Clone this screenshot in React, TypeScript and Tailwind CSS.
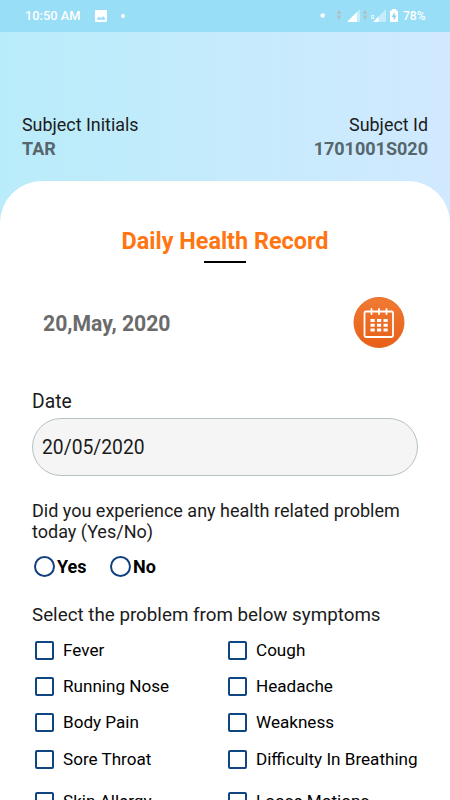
const symptoms = [
  { left: "Fever", right: "Cough" },
  { left: "Running Nose", right: "Headache" },
  { left: "Body Pain", right: "Weakness" },
  { left: "Sore Throat", right: "Difficulty In Breathing" },
];

export default function App() {
  return (
    <div className="h-[800px] w-[450px] overflow-hidden bg-linear-to-r from-[#b9ecfa] via-[#c5ebfc] to-[#d1e9ff] font-['Roboto',sans-serif] text-[#1b1b1b]">
      <StatusBar />

      <header className="flex h-[149px] justify-between pt-[81px] pr-[22px] pl-[22px] text-[18px] leading-6 whitespace-nowrap">
        <div>
          <p className="text-[17.9px]">Subject Initials</p>
          <p className="font-bold text-[#56666d]">TAR</p>
        </div>
        <div className="text-right">
          <p className="text-[17.9px]">Subject Id</p>
          <p className="font-bold text-[#56666d]">1701001S020</p>
        </div>
      </header>

      <main className="h-[619px] rounded-t-[42px] bg-white pt-[44px]">
        <h1 className="text-center text-[23.4px] leading-8 font-bold text-[#ff7611]">Daily Health Record</h1>
        <div className="mx-auto mt-[4px] h-[2px] w-[42px] bg-black" />

        <div className="mt-[34px] flex h-[51px] items-center justify-between pr-[45px] pl-[43px]">
          <span className="pt-[2px] text-[21.2px] font-bold text-[#6b6b6b]">20,May, 2020</span>
          <CalendarIcon />
        </div>

        <div className="mt-[42px] px-8">
          <label className="block text-[19.3px] leading-6">Date</label>
          <div className="mt-[4px] flex h-[58px] items-center rounded-full border-[1.5px] border-[#b5c1c4] bg-[#f5f5f5] pt-[3px] pl-[9px] text-[19.3px]">
            20/05/2020
          </div>

          <p className="mt-[24px] text-[18px] leading-[21px]">
            Did you experience any health related problem
            <br />
            today (Yes/No)
          </p>

          <div className="mt-[12px] flex h-6 items-center pl-[2px] text-[18px] font-bold text-black">
            <Radio label="Yes" className="w-[76px]" />
            <Radio label="No" />
          </div>

          <p className="mt-[25px] text-[18.8px] leading-6 whitespace-nowrap">Select the problem from below symptoms</p>

          <div className="mt-[5px] pl-[3px]">
            {symptoms.map((row) => (
              <div key={row.left} className="flex h-[36.3px] items-center">
                <Checkbox label={row.left} className="w-[193px]" />
                <Checkbox label={row.right} />
              </div>
            ))}
            <div className="mt-[6px] flex h-[36px] items-center">
              <Checkbox label="Skin Allergy" className="w-[193px]" />
              <Checkbox label="Loose Motions" />
            </div>
          </div>
        </div>
      </main>
    </div>
  );
}

function Radio({ label, className = "" }: { label: string; className?: string }) {
  return (
    <div className={`flex items-center gap-[2px] ${className}`}>
      <span className="size-[21px] rounded-full border-2 border-[#123f7d]" />
      <span>{label}</span>
    </div>
  );
}

function Checkbox({ label, className = "" }: { label: string; className?: string }) {
  return (
    <div className={`flex shrink-0 items-center gap-[9px] text-[17.1px] whitespace-nowrap text-black ${className}`}>
      <span className="size-[19px] shrink-0 rounded-[2px] border-2 border-[#0f4581]" />
      <span className="pt-px">{label}</span>
    </div>
  );
}

function StatusBar() {
  return (
    <div className="flex h-8 items-center bg-[#98def6] pr-[25px] pl-[25px] text-white">
      <span className="w-[58px] text-[12.8px] font-medium whitespace-nowrap">10:50 AM</span>
      <svg className="ml-[12px]" width="12" height="12" viewBox="0 0 12 12">
        <path fillRule="evenodd" fill="#fff" d="M1 0h10a1 1 0 0 1 1 1v10a1 1 0 0 1-1 1H1a1 1 0 0 1-1-1V1a1 1 0 0 1 1-1zM2 9.700h8V8L8 6.300 6 8.300 4 6.800 2 8.500z" />
      </svg>
      <span className="ml-[14px] size-[4px] rounded-full bg-white" />

      <svg className="ml-auto" width="80" height="16" viewBox="320 8 80 16">
        <circle cx="322.700" cy="15.500" r="2.200" fill="#fff" />
        <path fill="#aebfc5" d="M336.700 14l2.300-4.500 2.300 4.500zM336.700 15.500h4.600l-2.300 4.500zM362.700 14l2.300-4.500 2.300 4.500zM362.700 15.500h4.600l-2.300 4.500z" />
        <path fill="#c3edfb" d="M347 22l13-13v13zM373 22l13-13v13z" />
        <path fill="#fff" d="M347 22l10-10v10zM373 22l5.500-5.500v5.500z" />
        <rect x="371.700" y="15.500" width="2" height="3" fill="none" stroke="#e5f7fd" />
        <path fill="#fff" d="M392 9h4v1.500h1a1 1 0 0 1 1 1V21a1 1 0 0 1-1 1h-6a1 1 0 0 1-1-1v-9.500a1 1 0 0 1 1-1h1z" />
        <path fill="#8cd4ef" d="M394.700 12l-3 5h2v3.500l3-5h-2z" />
      </svg>
      <span className="ml-[3px] w-[22px] text-[12px] font-medium">78%</span>
    </div>
  );
}

function CalendarIcon() {
  return (
    <svg width="52" height="52" viewBox="0 0 52 52">
      <defs>
        <linearGradient id="calendarFill" x1="0" y1="0" x2="0" y2="1">
          <stop offset="0" stopColor="#f07a32" />
          <stop offset="1" stopColor="#e85f18" />
        </linearGradient>
      </defs>
      <circle cx="26" cy="25.500" r="25" fill="url(#calendarFill)" stroke="#e66a22" />
      <g fill="none" stroke="#fff" strokeWidth="1.800" strokeLinecap="round">
        <rect x="11.500" y="14.500" width="28.500" height="25.500" rx="1.500" />
        <path d="M18.500 12v5M26 12v5M33.500 12v5" />
      </g>
      <path
        fill="#fff"
        d="M17.500 22h4.200v3h-4.200zM24 22h4.200v3H24zM30.500 22h4.200v3h-4.200zM17.500 26.800h4.200v3h-4.200zM24 26.800h4.200v3H24zM30.500 26.800h4.200v3h-4.200zM17.500 31.500h4.200v3h-4.200zM24 31.500h4.200v3H24zM30.500 31.500h4.200v3h-4.200z"
      />
    </svg>
  );
}
